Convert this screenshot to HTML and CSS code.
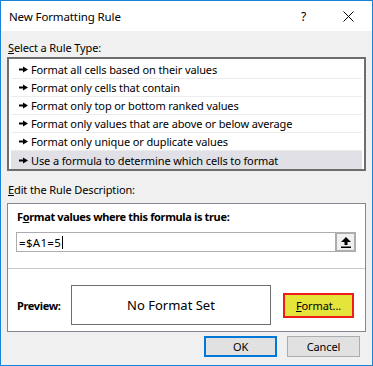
FILE: index.html
```html
<!DOCTYPE html>
<html lang="en">

<head>
    <meta charset="UTF-8">
    <meta name="viewport" content="width=device-width, initial-scale=1.0">
    <title>New Formatting Rule</title>
    <link rel="stylesheet" href="styles.css">
</head>

<body>

    <div class="dialog">
        <div class="titlebar">
            <span class="title">New Formatting Rule</span>
            <span class="help">?</span>
            <svg class="close" width="11" height="11" viewBox="0 0 11 11">
                <path d="M0.5 0.5 L10.5 10.5 M10.5 0.5 L0.5 10.5" stroke="#000" stroke-width="1" fill="none" />
            </svg>
        </div>

        <div class="content">
            <div class="label"><u>S</u>elect a Rule Type:</div>
            <ul class="rule-list">
                <li><svg class="arrow" width="9" height="7" viewBox="0 0 9 7"><path d="M0 2.5h4V0.5l5 3-5 3V4.5H0z" fill="#000" /></svg>Format all cells based on their values</li>
                <li><svg class="arrow" width="9" height="7" viewBox="0 0 9 7"><path d="M0 2.5h4V0.5l5 3-5 3V4.5H0z" fill="#000" /></svg>Format only cells that contain</li>
                <li><svg class="arrow" width="9" height="7" viewBox="0 0 9 7"><path d="M0 2.5h4V0.5l5 3-5 3V4.5H0z" fill="#000" /></svg>Format only top or bottom ranked values</li>
                <li><svg class="arrow" width="9" height="7" viewBox="0 0 9 7"><path d="M0 2.5h4V0.5l5 3-5 3V4.5H0z" fill="#000" /></svg>Format only values that are above or below average</li>
                <li><svg class="arrow" width="9" height="7" viewBox="0 0 9 7"><path d="M0 2.5h4V0.5l5 3-5 3V4.5H0z" fill="#000" /></svg>Format only unique or duplicate values</li>
                <li class="selected"><svg class="arrow" width="9" height="7" viewBox="0 0 9 7"><path d="M0 2.5h4V0.5l5 3-5 3V4.5H0z" fill="#000" /></svg>Use a formula to determine which cells to format</li>
            </ul>

            <div class="label label-edit"><u>E</u>dit the Rule Description:</div>
            <div class="desc-box">
                <div class="desc-head">F<u>o</u>rmat values where this formula is true:</div>
                <div class="formula">
                    <span class="formula-text">=$A1=5<span class="caret"></span></span>
                    <span class="ref-btn">
                        <svg width="10" height="11" viewBox="0 0 10 11">
                            <path d="M5 0 L10 5 H6.5 V8 H3.5 V5 H0 Z" fill="#000" />
                            <rect x="0" y="9.5" width="10" height="1.5" fill="#000" />
                        </svg>
                    </span>
                </div>
                <div class="separator"></div>
                <div class="preview-row">
                    <span class="preview-label">Preview:</span>
                    <div class="preview-box">No Format Set</div>
                    <div class="format-btn"><u>F</u>ormat...</div>
                </div>
            </div>

            <div class="buttons">
                <div class="btn btn-ok">OK</div>
                <div class="btn">Cancel</div>
            </div>
        </div>
    </div>

</body>

</html>
```

FILE: styles.css
```css
html,
body {
    margin: 0;
    padding: 0;
}

body {
    font-family: "Noto Sans", "Liberation Sans", sans-serif;
    font-size: 11px;
    letter-spacing: -0.12px;
    color: #000;
    background: #f0f0f0;
}

.dialog {
    width: 373px;
    height: 366px;
    box-sizing: border-box;
    border: 1px solid #1883d7;
    display: flex;
    flex-direction: column;
    background: #f0f0f0;
}

.titlebar {
    height: 30px;
    background: #fff;
    display: flex;
    align-items: center;
    padding-left: 8px;
}

.title {
    font-size: 11.5px;
    flex: 1;
}

.help {
    font-size: 12px;
    margin-right: 37px;
}

.close {
    margin-right: 18px;
}

.content {
    flex: 1;
    padding: 0 6px;
}

.label {
    height: 16px;
    line-height: 16px;
    margin-top: 9px;
    padding-left: 1px;
}

.label-edit {
    margin-top: 11px;
}

.rule-list {
    list-style: none;
    margin: 1px 0 0;
    padding: 2px 2px 0;
    background: #fff;
    border: 2px solid #6d6d6d;
}

.rule-list li {
    height: 18px;
    box-sizing: border-box;
    border-bottom: 1px solid #ececec;
    display: flex;
    align-items: center;
    padding-left: 8px;
}

.rule-list li:last-child {
    border-bottom: none;
}

.rule-list li.selected {
    background: #e0e0e6;
}

.arrow {
    margin-right: 3px;
    flex: none;
}

.desc-box {
    margin-top: 5px;
    height: 129px;
    box-sizing: border-box;
    border: 1px solid #828790;
    background: #fff;
}

.desc-head {
    font-weight: bold;
    letter-spacing: -0.35px;
    height: 16px;
    line-height: 16px;
    margin: 5px 0 0 9px;
}

.formula {
    margin: 7px 9px 0 8px;
    height: 20px;
    box-sizing: border-box;
    border: 1px solid #adadad;
    display: flex;
    align-items: stretch;
}

.formula-text {
    flex: 1;
    display: flex;
    align-items: center;
    padding-left: 2px;
    font-size: 11.5px;
    letter-spacing: 0.3px;
}

.caret {
    display: inline-block;
    width: 1px;
    height: 13px;
    background: #000;
    margin-left: 1px;
}

.ref-btn {
    width: 21px;
    box-sizing: border-box;
    border: 2px solid #adadad;
    background: #f0f0f0;
    margin: -1px -1px -1px 0;
    display: flex;
    align-items: center;
    justify-content: center;
}

.separator {
    height: 1px;
    background: #c8c8c8;
    margin-top: 16px;
}

.preview-row {
    display: flex;
    align-items: center;
    margin-top: 16px;
}

.preview-label {
    font-weight: bold;
    letter-spacing: -0.35px;
    width: 54px;
    padding-left: 9px;
}

.preview-box {
    width: 200px;
    height: 40px;
    box-sizing: border-box;
    border: 1px solid #6d6d6d;
    display: flex;
    align-items: center;
    justify-content: center;
    font-size: 13px;
    letter-spacing: 0;
}

.format-btn {
    margin-left: 12px;
    width: 71px;
    height: 25px;
    box-sizing: border-box;
    border: 2px solid #ee1c1c;
    background: #e4e43a;
    display: flex;
    align-items: center;
    justify-content: center;
}

.buttons {
    display: flex;
    justify-content: flex-end;
    gap: 10px;
    margin-top: 4px;
    padding-right: 6px;
}

.btn {
    width: 73px;
    height: 21px;
    box-sizing: border-box;
    border: 1px solid #adadad;
    background: #e1e1e1;
    display: flex;
    align-items: center;
    justify-content: center;
}

.btn-ok {
    border: 2px solid #0078d7;
}
```
